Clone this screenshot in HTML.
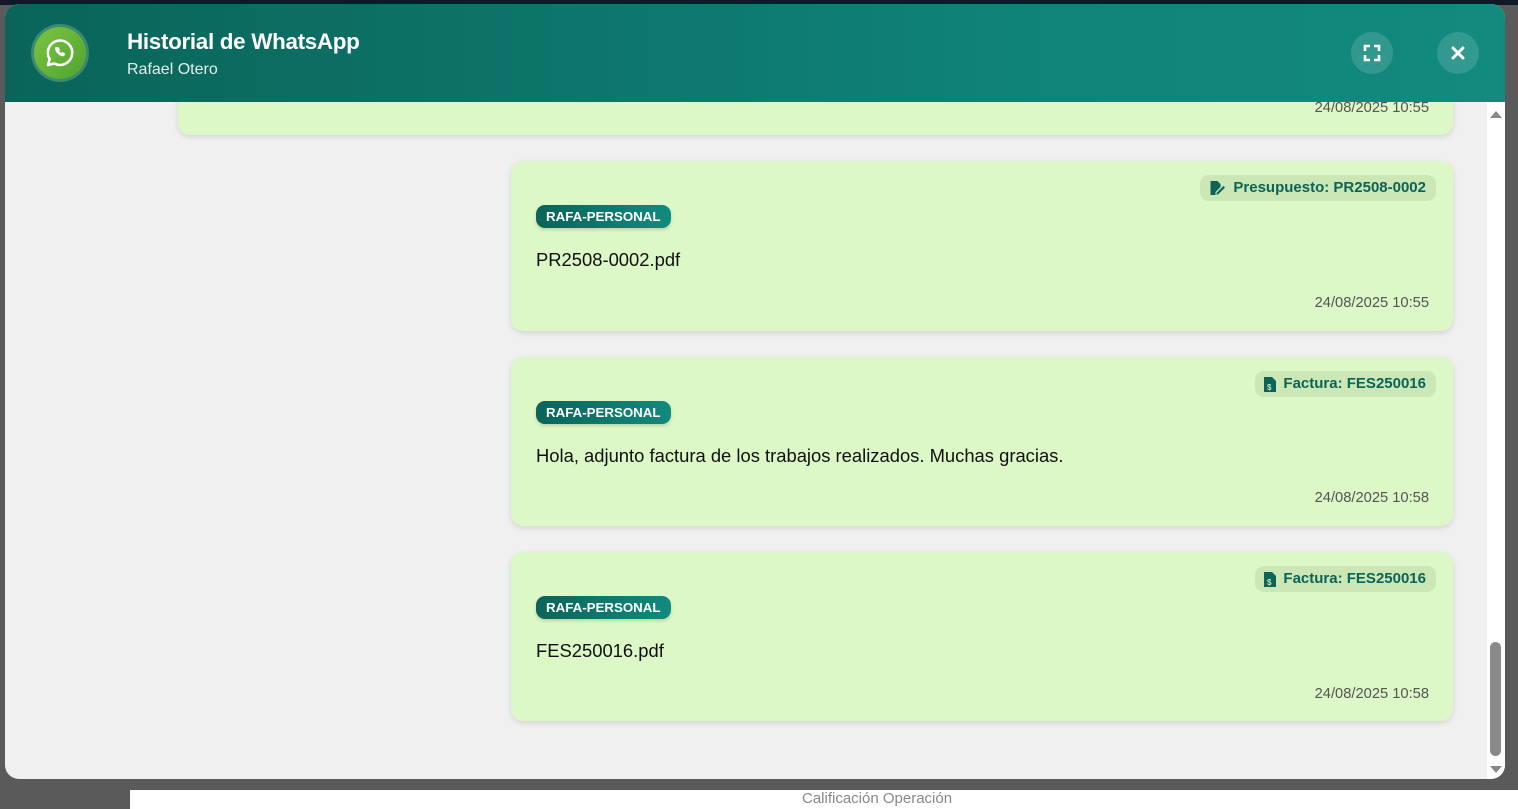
<!DOCTYPE html>
<html><head><meta charset="utf-8"><style>
*{box-sizing:border-box;margin:0;padding:0}
body{width:1518px;height:809px;overflow:hidden;background:#5a5a5a;font-family:"Liberation Sans",Arial,sans-serif;position:relative}
.topbar{position:absolute;left:0;top:0;width:1518px;height:5px;background:#111827}
.bottom{position:absolute;left:130px;top:790px;width:1388px;height:19px;background:#fff;color:#888;font-size:15px;padding-left:672px}
.modal{position:absolute;left:5px;top:4px;width:1500px;height:775px;border-radius:14px;background:#f0f0f0;overflow:hidden}
.hdr{position:absolute;left:0;top:0;width:1500px;height:98px;background:linear-gradient(90deg,#0a6459,#108478 70%,#128a7e);z-index:2}
.logo{position:absolute;left:26px;top:20px;width:58px;height:58px;border-radius:50%;background:#3d8a6f;padding:3px}
.logo div{width:52px;height:52px;border-radius:50%;background:linear-gradient(135deg,#7cc440,#4fa432);display:flex;align-items:center;justify-content:center}
.title{position:absolute;left:122px;top:25px;color:#fff;font-weight:bold;font-size:22.4px;letter-spacing:-0.3px}
.sub{position:absolute;left:122px;top:57px;color:#e1f0ec;font-size:16px}
.btn{position:absolute;top:28px;width:42px;height:42px;border-radius:50%;background:rgba(255,255,255,0.14);display:flex;align-items:center;justify-content:center}
.scroll{position:absolute;left:1482px;top:98px;width:18px;height:677px;background:#fff}
.thumb{position:absolute;left:3px;top:540px;width:11px;height:114px;border-radius:6px;background:#8a8a8a}
.bub{position:absolute;background:#dcf8c6;border-radius:12px;box-shadow:0 2px 6px rgba(0,0,0,0.12)}
.ts{position:absolute;right:24px;font-size:14.7px;color:#555}
.tag{position:absolute;left:25px;top:44px;height:23px;padding:0 10px;border-radius:9px;background:linear-gradient(90deg,#0a6459,#128a7e);color:#fff;font-weight:bold;font-size:13.3px;line-height:23px;box-shadow:0 2px 3px rgba(0,0,0,0.15)}
.doc{position:absolute;right:17px;top:14px;height:26px;padding:0 10px 0 9px;border-radius:9px;background:#cae7b5;color:#0c6357;font-weight:bold;font-size:15px;line-height:26px;display:flex;align-items:center;gap:7px}
.txt{position:absolute;left:25px;top:88px;font-size:18.4px;color:#111}
</style></head><body>
<div class="topbar"></div>
<div class="bottom">Calificación Operación</div>
<div class="modal">
 <div class="hdr">
  <div class="logo"><div>
   <svg width="34" height="34" viewBox="0 0 24 24" fill="none" stroke="#fff" stroke-width="1.8"><path d="M3.5 20.5l1.2-4.2A8.6 8.6 0 1 1 8 19.4z" stroke-linejoin="round"/><path d="M9 8.2c-.4.9.2 2.6 1.6 4s3.1 2 4 1.6l.6-1.1-1.6-.9-.7.6c-.7-.3-1.7-1.2-2-2l.6-.7-.9-1.6z" fill="#fff" stroke-width="0.8"/></svg>
  </div></div>
  <div class="title">Historial de WhatsApp</div>
  <div class="sub">Rafael Otero</div>
  <div class="btn" style="left:1346px"><svg width="18" height="18" viewBox="0 0 18 18" fill="none" stroke="#fff" stroke-width="2.6"><path d="M2 7V2h5M11 2h5v5M16 11v5h-5M7 16H2v-5"/></svg></div>
  <div class="btn" style="left:1432px"><svg width="14" height="14" viewBox="0 0 14 14" stroke="#fff" stroke-width="3" stroke-linecap="round"><path d="M2 2l10 10M12 2L2 12"/></svg></div>
 </div>
 <div class="bub" style="left:173px;top:40px;width:1275px;height:91px"><div class="ts" style="top:56px">24/08/2025 10:55</div></div>
 <div class="bub" style="left:506px;top:157px;width:942px;height:170px">
  <div class="doc"><svg width="17" height="15" viewBox="0 0 16 15"><path d="M1 0h7l3 3v3L6 11v3H1z" fill="#0c6357"/><path d="M7 12l7-7 1.5 1.5-7 7H7z" fill="#0c6357"/></svg>Presupuesto: PR2508-0002</div>
  <div class="tag">RAFA-PERSONAL</div>
  <div class="txt">PR2508-0002.pdf</div>
  <div class="ts" style="top:134px">24/08/2025 10:55</div>
 </div>
 <div class="bub" style="left:506px;top:353px;width:942px;height:169px">
  <div class="doc"><svg width="12" height="15" viewBox="0 0 12 15"><path d="M0 0h8l4 4v11H0z" fill="#0c6357"/><text x="3" y="13" font-size="8" fill="#cae7b5" font-weight="bold" font-family="Liberation Sans">$</text></svg>Factura: FES250016</div>
  <div class="tag">RAFA-PERSONAL</div>
  <div class="txt">Hola, adjunto factura de los trabajos realizados. Muchas gracias.</div>
  <div class="ts" style="top:133px">24/08/2025 10:58</div>
 </div>
 <div class="bub" style="left:506px;top:548px;width:942px;height:169px">
  <div class="doc"><svg width="12" height="15" viewBox="0 0 12 15"><path d="M0 0h8l4 4v11H0z" fill="#0c6357"/><text x="3" y="13" font-size="8" fill="#cae7b5" font-weight="bold" font-family="Liberation Sans">$</text></svg>Factura: FES250016</div>
  <div class="tag">RAFA-PERSONAL</div>
  <div class="txt">FES250016.pdf</div>
  <div class="ts" style="top:134px">24/08/2025 10:58</div>
 </div>
 <div class="scroll">
  <svg style="position:absolute;left:3px;top:8px" width="12" height="8"><path d="M0 8L6 1l6 7z" fill="#888"/></svg>
  <div class="thumb"></div>
  <svg style="position:absolute;left:3px;top:664px" width="12" height="8"><path d="M0 0l6 7 6-7z" fill="#888"/></svg>
 </div>
</div>
</body></html>
